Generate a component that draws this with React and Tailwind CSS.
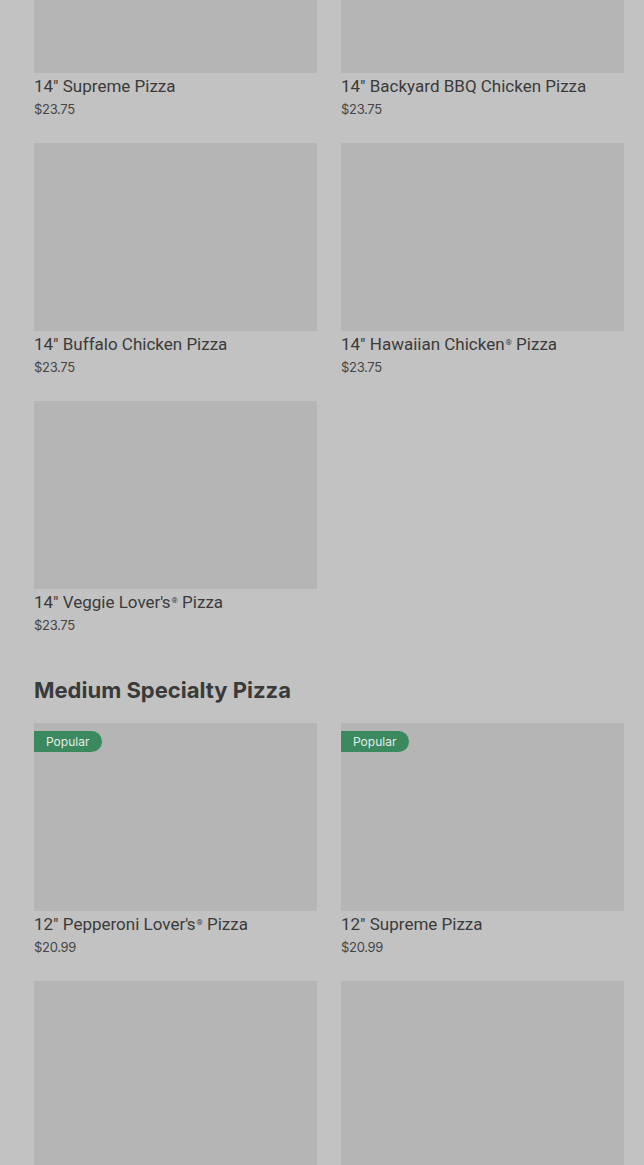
import React from "react";

const R = () => <span className="text-[8px] relative top-[-5px] ml-[1px]">®</span>;
const Ap = () => <span className="tracking-[-1.5px]">'</span>;

const large = [
  { name: <>14" Supreme Pizza</>, price: "$23.75" },
  { name: <>14" Backyard BBQ Chicken Pizza</>, price: "$23.75" },
  { name: <>14" Buffalo Chicken Pizza</>, price: "$23.75" },
  { name: <>14" Hawaiian Chicken<R /> Pizza</>, price: "$23.75" },
  { name: <>14" Veggie Lover<Ap />s<R /> Pizza</>, price: "$23.75" },
];

const medium = [
  { name: <>12" Pepperoni Lover<Ap />s<R /> Pizza</>, price: "$20.99", popular: true },
  { name: <>12" Supreme Pizza</>, price: "$20.99", popular: true },
  { name: "", price: "" },
  { name: "", price: "" },
];

function Card({ item }) {
  return (
    <div className="flex flex-col">
      <div className="relative w-full h-[188px] bg-[#b5b5b5]">
        {item.popular && (
          <span className="absolute left-0 top-[8px] h-[21px] flex items-center pl-[12px] pr-[13px] rounded-r-full bg-[#3b895f] text-[12px] text-[#e3ece6] font-['Inter',sans-serif]">
            Popular
          </span>
        )}
      </div>
      <div className="mt-[2px] h-[22px] leading-[22px] text-[17px] text-[#3b3b3b] font-['Roboto',sans-serif] whitespace-nowrap">
        {item.name}
      </div>
      <div className="h-[24px] leading-[24px] text-[13px] text-[#464646] font-['Inter',sans-serif] tracking-[-0.3px]">
        {item.price}
      </div>
    </div>
  );
}

export default function App() {
  return (
    <div className="w-[644px] h-[1165px] overflow-hidden bg-[#c2c2c2]">
      <div className="pl-[34px] pr-[20px] mt-[-115px]">
        <div className="grid grid-cols-2 gap-x-[24px] gap-y-[22px]">
          {large.map((it, i) => (
            <Card key={i} item={it} />
          ))}
        </div>
        <h2 className="mt-[38px] mb-[18px] h-[30px] leading-[30px] text-[22px] font-bold text-[#3a3a3a] font-['Inter',sans-serif]">
          Medium Specialty Pizza
        </h2>
        <div className="grid grid-cols-2 gap-x-[24px] gap-y-[22px]">
          {medium.map((it, i) => (
            <Card key={i} item={it} />
          ))}
        </div>
      </div>
    </div>
  );
}
